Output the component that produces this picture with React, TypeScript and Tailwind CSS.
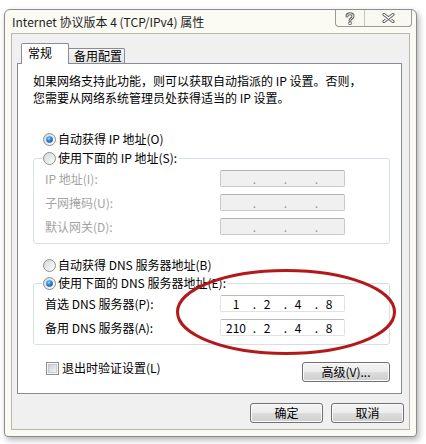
import { useId } from "react";

const cjk = "font-['Noto_Sans_CJK_SC','Noto_Sans',sans-serif]";

function Radio({ checked }: { checked?: boolean }) {
  const id = useId();
  return (
    <svg width="13" height="13" viewBox="0 0 13 13" className="shrink-0">
      <defs>
        <linearGradient id={`${id}g`} x1="0" y1="0" x2="1" y2="1">
          <stop offset="0" stopColor="#d2d4d6" />
          <stop offset="1" stopColor="#ffffff" />
        </linearGradient>
        <radialGradient id={`${id}b`} cx="0.4" cy="0.35" r="0.7">
          <stop offset="0" stopColor="#8fd6ff" />
          <stop offset="0.5" stopColor="#2a8ce0" />
          <stop offset="1" stopColor="#0b4596" />
        </radialGradient>
      </defs>
      <circle cx="6.5" cy="6.5" r="6" fill={`url(#${id}g)`} stroke="#8e8f8f" />
      {checked && <circle cx="6.5" cy="6.5" r="3.3" fill={`url(#${id}b)`} />}
    </svg>
  );
}

function Checkbox() {
  const id = useId();
  return (
    <svg width="13" height="13" viewBox="0 0 13 13" className="shrink-0">
      <defs>
        <linearGradient id={id} x1="0" y1="0" x2="1" y2="1">
          <stop offset="0" stopColor="#c9cdd2" />
          <stop offset="1" stopColor="#f4f5f6" />
        </linearGradient>
      </defs>
      <rect x="0.5" y="0.5" width="12" height="12" fill="#f4f4f4" stroke="#8e8f8f" />
      <rect x="2.5" y="2.5" width="8" height="8" fill={`url(#${id})`} stroke="#b3b7bc" strokeWidth="0.6" />
    </svg>
  );
}

function IpBox({ values, disabled }: { values?: string[]; disabled?: boolean }) {
  const v = values ?? ["", "", "", ""];
  return (
    <div
      className={`flex h-[17px] w-[125px] shrink-0 items-center rounded-[2px] border pl-[5px] text-[12px] leading-[15px] ${
        disabled
          ? "border-[#c9c9c9] border-t-[#b4b4b4] bg-[#f0f0f0] text-[#9c9c9c]"
          : "border-[#dfe3e8] border-t-[#b8bcc2] bg-white text-black"
      }`}
    >
      {v.map((o, i) => (
        <div key={i} className="flex">
          {i > 0 && <span className="w-[11px] text-right pr-[1px]">.</span>}
          <span className="w-[20px] text-center">{o}</span>
        </div>
      ))}
    </div>
  );
}

function Row({ label, disabled, values }: { label: string; disabled?: boolean; values?: string[] }) {
  return (
    <div className="flex h-[17px] items-center pl-[11px]">
      <span className={`w-[175px] ${disabled ? "text-[#a3a3a3]" : "text-black"}`}>{label}</span>
      <IpBox values={values} disabled={disabled} />
    </div>
  );
}

function WinButton({ label, w }: { label: string; w: string }) {
  return (
    <div
      className={`${w} flex h-[20px] items-center justify-center rounded-[3px] border border-[#707070] bg-[linear-gradient(#f4f4f4,#ececec_48%,#dcdcdc_52%,#cfcfcf)] text-[12px] text-black shadow-[inset_0_0_0_1px_#fbfbfb]`}
    >
      {label}
    </div>
  );
}

export default function App() {
  return (
    <div className={`relative h-[444px] w-[426px] overflow-hidden bg-white pl-[4px] pt-[9px] ${cjk}`}>
      <div className="flex h-[428px] w-[413px] flex-col rounded-t-[6px] rounded-b-[4px] border border-[#8c8c8c] bg-[#fbfbf3] shadow-[2px_3px_6px_rgba(0,0,0,0.3)]">
        {/* title bar */}
        <div className="flex h-[23px] justify-between">
          <div className="pl-[7px] pt-[5px] text-[12px] leading-[14px] text-[#1e1e1e]">
            Internet 协议版本 4 (TCP/IPv4) 属性
          </div>
          <div className="mr-[4px] flex h-[17px] rounded-b-[4px] border border-t-0 border-[#9a9a96] bg-[#f9f9f1]">
            <div className="flex w-[29px] items-center justify-center border-r border-[#c6c6c0]">
              <svg width="10" height="13" viewBox="0 0 10 13">
                <path d="M2 4 C2 1 8 1 8 4 C8 6.5 5 6.5 5 8.5" fill="none" stroke="#666" strokeWidth="3" strokeLinecap="round" />
                <path d="M2 4 C2 1 8 1 8 4 C8 6.5 5 6.5 5 8.5" fill="none" stroke="#fff" strokeWidth="1" strokeLinecap="round" />
                <circle cx="5" cy="11.3" r="1.5" fill="#fff" stroke="#666" />
              </svg>
            </div>
            <div className="flex w-[46px] items-center justify-center">
              <svg width="13" height="10" viewBox="0 0 13 10">
                <path d="M2 1.5 L11 8.5 M11 1.5 L2 8.5" fill="none" stroke="#666" strokeWidth="3.2" strokeLinecap="round" />
                <path d="M2 1.5 L11 8.5 M11 1.5 L2 8.5" fill="none" stroke="#fff" strokeWidth="1.2" strokeLinecap="round" />
              </svg>
            </div>
          </div>
        </div>

        {/* client area */}
        <div className="mx-[6px] h-[397px] border border-[#b8b8b0] bg-[#f0f0f0] px-[5px] pt-[9px] text-[12px]">
          <div className="flex h-[20px] items-end pl-[4px]">
            <div className="relative z-10 -mb-px flex h-[21px] w-[48px] items-start rounded-t-[2px] border border-b-0 border-[#898c95] bg-white pl-[6px] pt-[2px] leading-[14px]">
              常规
            </div>
            <div className="flex h-[15px] w-[56px] items-center rounded-tr-[2px] border border-b-0 border-l-0 border-[#898c95] bg-[linear-gradient(#f6f6f6,#e4e4e4)] pl-[5px] leading-[14px]">
              备用配置
            </div>
          </div>

          <div className="flex h-[331px] w-[385px] flex-col border border-[#898c95] bg-white pl-[15px] pr-[11px]">
            <div className="flex flex-col whitespace-nowrap pt-[8px] leading-[17px]">
              <span>如果网络支持此功能，则可以获取自动指派的 IP 设置。否则，</span>
              <span>您需要从网络系统管理员处获得适当的 IP 设置。</span>
            </div>

            <div className="mt-[25px] flex h-[16px] items-center gap-[2px] pl-[10px]">
              <Radio checked />
              <span>自动获得 IP 地址(O)</span>
            </div>

            <div className="mt-[11px] flex flex-col rounded-[3px] border border-[#d5dfe5] pb-[8px]">
              <div className="-mt-[9px] ml-[8px] flex h-[16px] items-center gap-[2px] self-start bg-white pl-[1px] pr-[2px]">
                <Radio />
                <span>使用下面的 IP 地址(S):</span>
              </div>
              <div className="mt-[4px] flex flex-col gap-[7px]">
                <Row label="IP 地址(I):" disabled />
                <Row label="子网掩码(U):" disabled />
                <Row label="默认网关(D):" disabled />
              </div>
            </div>

            <div className="mt-[13px] flex h-[16px] items-center gap-[2px] pl-[10px]">
              <Radio />
              <span>自动获得 DNS 服务器地址(B)</span>
            </div>

            <div className="mt-[10px] flex flex-col rounded-[3px] border border-[#d5dfe5] pb-[8px]">
              <div className="-mt-[9px] ml-[8px] flex h-[16px] items-center gap-[2px] self-start bg-white pl-[1px] pr-[2px]">
                <Radio checked />
                <span>使用下面的 DNS 服务器地址(E):</span>
              </div>
              <div className="mt-[4px] flex flex-col gap-[7px]">
                <Row label="首选 DNS 服务器(P):" values={["1", "2", "4", "8"]} />
                <Row label="备用 DNS 服务器(A):" values={["210", "2", "4", "8"]} />
              </div>
            </div>

            <div className="mt-[15px] flex items-start justify-between">
              <div className="flex h-[16px] items-center gap-[3px] pl-[13px]">
                <Checkbox />
                <span>退出时验证设置(L)</span>
              </div>
              <div className="mt-[2px]">
                <WinButton label="高级(V)..." w="w-[88px]" />
              </div>
            </div>
          </div>

          <div className="mt-[9px] flex justify-end gap-[8px]">
            <WinButton label="确定" w="w-[73px]" />
            <WinButton label="取消" w="w-[73px]" />
          </div>
        </div>
      </div>

      {/* red annotation ellipse */}
      <svg className="pointer-events-none absolute left-0 top-0" width="426" height="444">
        <ellipse cx="286" cy="312" rx="108.5" ry="41.5" fill="none" stroke="#b3191b" strokeWidth="3" />
      </svg>
    </div>
  );
}
